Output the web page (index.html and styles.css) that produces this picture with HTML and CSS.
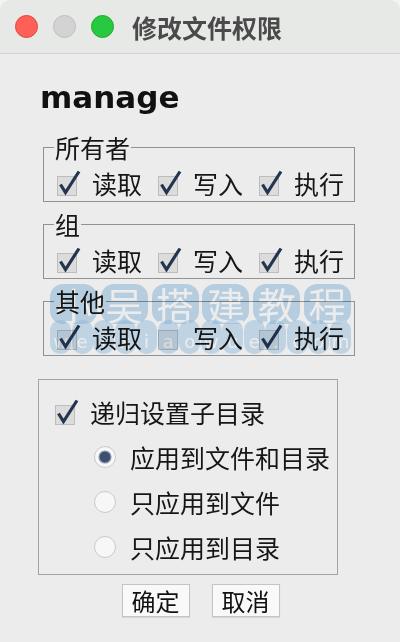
FILE: index.html
```html
<!DOCTYPE html>
<html lang="zh">
<head>
<meta charset="utf-8">
<title>修改文件权限</title>
<link rel="stylesheet" href="styles.css">
</head>
<body>
<div class="window">
  <div class="titlebar">
    <span class="light red"></span>
    <span class="light gray"></span>
    <span class="light green"></span>
    <span class="title">修改文件权限</span>
  </div>
  <div class="content">
    <h1 class="name">manage</h1>

    <fieldset class="group">
      <legend>所有者</legend>
      <div class="row">
        <span class="cb"><svg class="box" viewBox="0 0 24 26"><rect class="sq" x="0.5" y="6.5" width="19" height="19"/><path class="tick" d="M3.5 14.5 L8.5 22.5 L22 1.5"/></svg>读取</span>
        <span class="cb"><svg class="box" viewBox="0 0 24 26"><rect class="sq" x="0.5" y="6.5" width="19" height="19"/><path class="tick" d="M3.5 14.5 L8.5 22.5 L22 1.5"/></svg>写入</span>
        <span class="cb"><svg class="box" viewBox="0 0 24 26"><rect class="sq" x="0.5" y="6.5" width="19" height="19"/><path class="tick" d="M3.5 14.5 L8.5 22.5 L22 1.5"/></svg>执行</span>
      </div>
    </fieldset>

    <fieldset class="group">
      <legend>组</legend>
      <div class="row">
        <span class="cb"><svg class="box" viewBox="0 0 24 26"><rect class="sq" x="0.5" y="6.5" width="19" height="19"/><path class="tick" d="M3.5 14.5 L8.5 22.5 L22 1.5"/></svg>读取</span>
        <span class="cb"><svg class="box" viewBox="0 0 24 26"><rect class="sq" x="0.5" y="6.5" width="19" height="19"/><path class="tick" d="M3.5 14.5 L8.5 22.5 L22 1.5"/></svg>写入</span>
        <span class="cb"><svg class="box" viewBox="0 0 24 26"><rect class="sq" x="0.5" y="6.5" width="19" height="19"/><path class="tick" d="M3.5 14.5 L8.5 22.5 L22 1.5"/></svg>执行</span>
      </div>
    </fieldset>

    <fieldset class="group">
      <legend>其他</legend>
      <div class="row">
        <span class="cb"><svg class="box" viewBox="0 0 24 26"><rect class="sq" x="0.5" y="6.5" width="19" height="19"/><path class="tick" d="M3.5 14.5 L8.5 22.5 L22 1.5"/></svg>读取</span>
        <span class="cb"><svg class="box" viewBox="0 0 24 26"><rect class="sq" x="0.5" y="6.5" width="19" height="19"/></svg>写入</span>
        <span class="cb"><svg class="box" viewBox="0 0 24 26"><rect class="sq" x="0.5" y="6.5" width="19" height="19"/><path class="tick" d="M3.5 14.5 L8.5 22.5 L22 1.5"/></svg>执行</span>
      </div>
    </fieldset>

    <div class="recursive">
      <div class="opt"><svg class="box" viewBox="0 0 24 26"><rect class="sq" x="0.5" y="6.5" width="19" height="19"/><path class="tick" d="M3.5 14.5 L8.5 22.5 L22 1.5"/></svg>递归设置子目录</div>
      <div class="opt radio"><svg class="rd" viewBox="0 0 24 24"><circle class="ring" cx="12" cy="12" r="10.5"/><circle class="dot" cx="12" cy="12" r="6"/></svg>应用到文件和目录</div>
      <div class="opt radio"><svg class="rd" viewBox="0 0 24 24"><circle class="ring" cx="12" cy="12" r="10.5"/></svg>只应用到文件</div>
      <div class="opt radio"><svg class="rd" viewBox="0 0 24 24"><circle class="ring" cx="12" cy="12" r="10.5"/></svg>只应用到目录</div>
    </div>

    <div class="buttons">
      <button class="btn">确定</button>
      <button class="btn">取消</button>
    </div>
  </div>

  <div class="watermark">
    <div class="wm-top"><span>小</span><span>吴</span><span>搭</span><span>建</span><span>教</span><span>程</span></div>
    <div class="wm-bottom"><span>w</span><span>e</span><span>i</span><span>x</span><span>i</span><span>a</span><span>o</span><span>w</span><span>u</span><span>e</span><span>.</span><span>c</span><span>o</span><span>m</span></div>
  </div>
</div>
</body>
</html>
```

FILE: styles.css
```css
html {
  background: #f4f4f4;
}
body {
  margin: 0;
  font-family: "Noto Sans CJK SC", "Noto Sans", sans-serif;
  color: #161616;
}
.window {
  position: relative;
  width: 400px;
  height: 642px;
  overflow: hidden;
  background: #ececec;
  border-radius: 10px 10px 0 0;
}
.titlebar {
  height: 53px;
  display: flex;
  align-items: center;
  padding-left: 15px;
  background: #e7e9e7;
  border-bottom: 1px solid #d2d2d2;
}
.light {
  width: 23px;
  height: 23px;
  border-radius: 50%;
  box-sizing: border-box;
  margin-right: 15px;
}
.red { background: #fe5f57; border: 1px solid #e2463f; }
.gray { background: #d2d3d2; border: 1px solid #bfc0bf; }
.green { background: #28c840; border: 1px solid #1dad2b; margin-right: 18px; }
.title {
  font-size: 25px;
  font-weight: 700;
  color: #4a4a4a;
  line-height: 30px;
}
.content {
  display: flex;
  flex-direction: column;
}
.name {
  margin: 25px 0 0 40px;
  font-family: "DejaVu Sans", sans-serif;
  font-weight: 700;
  font-size: 31px;
  line-height: 36px;
  color: #111;
}
.group {
  margin: 9px 0 0 43px;
  padding: 0;
  width: 312px;
  height: 68px;
  box-sizing: border-box;
  min-width: 0;
  border: 1px solid #929292;
}
.group:first-of-type {
  margin-top: 19px;
}
.group legend {
  margin-left: 10px;
  padding: 0 1px;
  font-size: 25px;
  line-height: 26px;
}
.row {
  display: flex;
  align-items: center;
  height: 41px;
  box-sizing: border-box;
  padding: 4px 0 0 13px;
  gap: 16px;
  font-size: 25px;
  line-height: 28px;
}
.cb {
  display: flex;
  align-items: center;
}
.box {
  width: 24px;
  height: 26px;
  margin-right: 11px;
  flex: none;
}
.sq {
  fill: #dcdcdc;
  stroke: #bdbdbd;
  stroke-width: 1;
}
.tick {
  fill: none;
  stroke: #23354f;
  stroke-width: 3.2;
  stroke-linejoin: miter;
}
.recursive {
  margin: 23px 0 0 38px;
  width: 300px;
  height: 196px;
  box-sizing: border-box;
  border: 1px solid #a3a3a3;
  padding: 9px 0 0 16px;
  display: flex;
  flex-direction: column;
}
.opt {
  height: 45px;
  display: flex;
  align-items: center;
  font-size: 25px;
  line-height: 28px;
}
.opt .box {
  margin-right: 11px;
}
.radio {
  padding-left: 38px;
}
.rd {
  width: 24px;
  height: 24px;
  margin-right: 13px;
  flex: none;
}
.ring {
  fill: #f7f7f7;
  stroke: #cacaca;
  stroke-width: 1;
}
.dot {
  fill: #3d5070;
  stroke: #8b99b0;
  stroke-width: 1.2;
}
.buttons {
  display: flex;
  justify-content: center;
  gap: 22px;
  margin-top: 9px;
  padding-left: 1px;
}
.btn {
  width: 68px;
  height: 33px;
  padding: 0;
  border: 1px solid #c4c4c4;
  background: #f9f9f9;
  box-shadow: 0 1px 1px rgba(0,0,0,0.08);
  font-family: "Noto Sans CJK SC", sans-serif;
  font-size: 24px;
  line-height: 30px;
  color: #111;
}
.watermark {
  position: absolute;
  left: 50px;
  top: 284px;
  width: 301px;
  pointer-events: none;
  mix-blend-mode: multiply;
}
.wm-top {
  display: flex;
  justify-content: space-between;
}
.wm-top span {
  width: 47px;
  height: 40px;
  border-radius: 13px;
  background: rgba(150, 195, 232, 0.55);
  color: #ffffff;
  font-size: 38px;
  line-height: 40px;
  text-align: center;
}
.wm-bottom {
  display: flex;
  justify-content: space-between;
  margin-top: -4px;
}
.wm-bottom span {
  width: 21px;
  height: 34px;
  border-radius: 10px;
  background: rgba(150, 195, 232, 0.45);
  color: #ffffff;
  font-family: "DejaVu Sans", sans-serif;
  font-size: 18px;
  line-height: 44px;
  text-align: center;
}
```
